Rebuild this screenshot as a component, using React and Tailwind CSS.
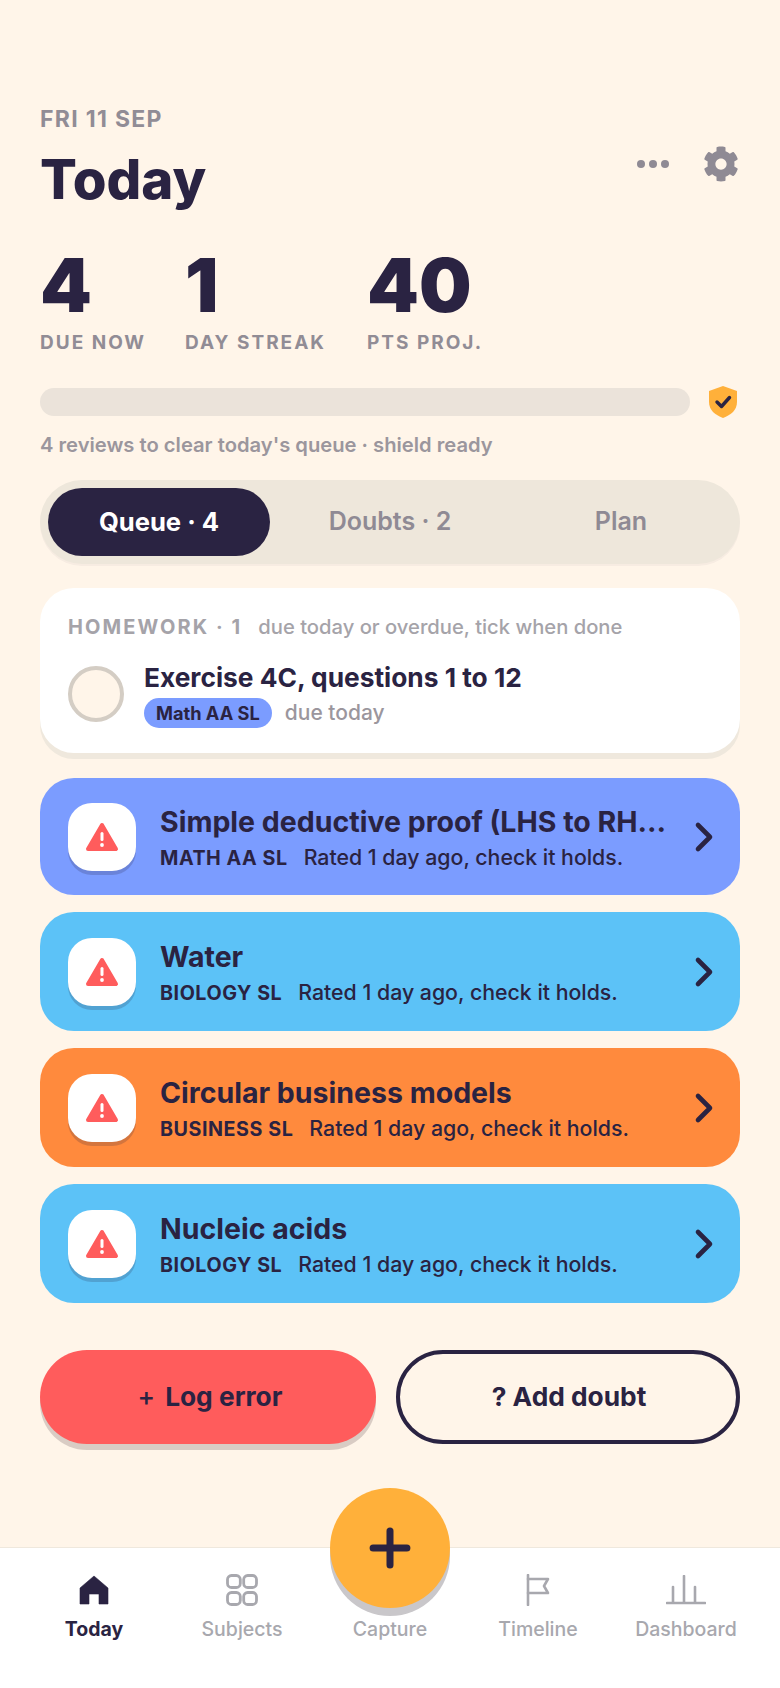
import React from 'react';
import { FaCog } from 'react-icons/fa';
import { Plus, ChevronRight } from 'lucide-react';

const rows = [
    { title: 'Simple deductive proof (LHS to RH…', subject: 'MATH AA SL', bg: 'bg-[#7b9cff]', h: 'h-[117px]' },
    { title: 'Water', subject: 'BIOLOGY SL', bg: 'bg-[#5cc2f7]', h: 'h-[119px]' },
    { title: 'Circular business models', subject: 'BUSINESS SL', bg: 'bg-[#ff8a3d]', h: 'h-[119px]' },
    { title: 'Nucleic acids', subject: 'BIOLOGY SL', bg: 'bg-[#5cc2f7]', h: 'h-[119px]' },
];

const Warning = () => (
    <svg width="34" height="30" viewBox="0 0 34 30">
        <path d="M17 3 L31 27 H3 Z" fill="#ff5c5c" stroke="#ff5c5c" strokeWidth="4" strokeLinejoin="round" />
        <rect x="15.5" y="10" width="3" height="9" rx="1.5" fill="#fff" />
        <circle cx="17" cy="23" r="1.9" fill="#fff" />
    </svg>
);

const Stat = ({ value, label, className }) => (
    <div className={className}>
        <div className="text-[74px] leading-[74px] font-black text-[#2a2342]">{value}</div>
        <div className="mt-[10px] text-[19px] leading-[22px] font-bold tracking-[2px] text-[#918c95]">{label}</div>
    </div>
);

const ReviewRow = ({ item }) => (
    <div className={`${item.bg} ${item.h} rounded-[34px] flex items-center pl-[28px] pr-[12px]`}>
        <div className="h-[68px] w-[68px] shrink-0 rounded-[24px] bg-white shadow-[0_4px_0_rgba(42,35,66,0.2)] flex items-center justify-center">
            <Warning />
        </div>
        <div className="ml-[24px] min-w-0 flex-1">
            <div className="pt-[1px] whitespace-nowrap text-[28.5px] leading-[36px] font-bold text-[#2a2342]">{item.title}</div>
            <div className="mt-[5px] flex items-baseline text-[#2a2342]">
                <span className="text-[19.7px] leading-[24px] font-bold tracking-[0.55px]">{item.subject}</span>
                <span className="ml-[16px] text-[21.3px] leading-[24px] font-medium">Rated 1 day ago, check it holds.</span>
            </div>
        </div>
        <ChevronRight className="shrink-0 text-[#2a2342]" size={48} strokeWidth={2.3} />
    </div>
);

const NavItem = ({ label, active, children }) => (
    <div className="flex-1 flex flex-col items-center">
        <div className="h-[44px] flex items-center justify-center">{children}</div>
        <div className={`mt-[5px] text-[19.5px] leading-[24px] ${active ? 'font-bold text-[#2a2342]' : 'font-medium text-[#a8a8ae]'}`}>{label}</div>
    </div>
);

export default function App() {
    return (
        <div className="relative h-[1688px] w-[780px] overflow-hidden bg-[#fff5e9] flex flex-col font-['Inter',sans-serif]">
            <main className="flex-1 px-[40px] pt-[106px]">
                <div className="text-[23px] leading-[27px] font-bold tracking-[1.3px] text-[#918c95]">FRI 11 SEP</div>

                <div className="mt-[15px] flex items-start justify-between">
                    <h1 className="text-[54.6px] leading-[63px] font-extrabold text-[#2a2342]">Today</h1>
                    <div className="-mt-[2px] flex items-center pr-[1px]">
                        <div className="flex gap-[4px]">
                            <span className="h-[8px] w-[8px] rounded-full bg-[#8f8a94]" />
                            <span className="h-[8px] w-[8px] rounded-full bg-[#8f8a94]" />
                            <span className="h-[8px] w-[8px] rounded-full bg-[#8f8a94]" />
                        </div>
                        <FaCog className="ml-[34px] text-[#8f8a94]" size={36} />
                    </div>
                </div>

                <div className="mt-[37px] flex">
                    <Stat value="4" label="DUE NOW" className="w-[145px]" />
                    <Stat value="1" label="DAY STREAK" className="w-[182px]" />
                    <Stat value="40" label="PTS PROJ." />
                </div>

                <div className="mt-[31px] flex items-center justify-between">
                    <div className="h-[28px] w-[650px] rounded-full bg-[#ebe3da]" />
                    <svg width="32" height="34" viewBox="0 0 32 34" className="mr-[1px]">
                        <path d="M16 1 L30 6 V17 C30 25 24 30 16 33 C8 30 2 25 2 17 V6 Z" fill="#ffb03a" />
                        <path d="M10 17 L14.5 21.5 L22.5 12.5" fill="none" stroke="#2a2342" strokeWidth="3.4" strokeLinecap="round" strokeLinejoin="round" />
                    </svg>
                </div>

                <p className="mt-[13px] text-[20.2px] leading-[26px] font-semibold text-[#9b969d]">4 reviews to clear today's queue · shield ready</p>

                <div className="mt-[22px] h-[84px] rounded-full bg-[#eee7db] p-[8px] flex shadow-[0_2px_0_rgba(42,35,66,0.04)]">
                    <div className="w-[222px] rounded-full bg-[#2a2342] flex items-center justify-center text-[25.6px] font-bold text-white">Queue · 4</div>
                    <div className="w-[240px] flex items-center justify-center text-[25px] font-semibold text-[#8f8a94]">Doubts · 2</div>
                    <div className="flex-1 flex items-center justify-center text-[25px] font-semibold text-[#8f8a94]">Plan</div>
                </div>

                <section className="mt-[24px] h-[165px] rounded-[34px] bg-white px-[28px] pt-[26px] shadow-[0_6px_0_#efe8dd]">
                    <div className="flex items-baseline">
                        <span className="text-[20px] leading-[26px] font-bold tracking-[2.1px] text-[#a5a3a9]">HOMEWORK · 1</span>
                        <span className="ml-[16px] text-[20.2px] leading-[26px] font-medium text-[#a5a3a9]">due today or overdue, tick when done</span>
                    </div>
                    <div className="mt-[20px] flex items-center">
                        <div className="h-[56px] w-[56px] rounded-full border-[4px] border-[#d4cdc4] bg-[#fff5e9]" />
                        <div className="ml-[20px]">
                            <div className="pt-[2px] text-[26.3px] leading-[32px] font-bold text-[#2a2342]">Exercise 4C, questions 1 to 12</div>
                            <div className="mt-[3px] flex items-center">
                                <span className="h-[30px] rounded-full bg-[#7b9cff] px-[12px] text-[18.2px] leading-[30px] font-bold text-[#2a2342]">Math AA SL</span>
                                <span className="ml-[13px] text-[21px] font-medium text-[#9b969d]">due today</span>
                            </div>
                        </div>
                    </div>
                </section>

                <div className="mt-[25px] flex flex-col gap-[17px]">
                    {rows.map((item) => (
                        <ReviewRow key={item.title} item={item} />
                    ))}
                </div>

                <div className="mt-[47px] flex gap-[20px]">
                    <button className="h-[94px] w-[336px] rounded-full bg-[#ff5c5c] pl-[4px] shadow-[0_6px_0_#d9ccc4] text-[26.3px] font-bold text-[#2a2342]">
                        <span className="mr-[10px] font-medium">+</span>Log error
                    </button>
                    <button className="h-[94px] flex-1 rounded-full border-[4px] border-[#2a2342] pl-[2px] text-[26.3px] font-bold text-[#2a2342]">? Add doubt</button>
                </div>
            </main>

            <nav className="h-[141px] shrink-0 bg-white border-t border-[#efe8dd] flex pt-[20px]">
                <div className="flex w-full px-[20px]">
                    <NavItem label="Today" active>
                        <svg width="30" height="30" viewBox="0 0 30 30">
                            <path d="M15 1 L29 13 V29 H20 V19 H10 V29 H1 V13 Z" fill="#2a2342" stroke="#2a2342" strokeWidth="0.6" strokeLinejoin="round" />
                        </svg>
                    </NavItem>
                    <NavItem label="Subjects">
                        <svg width="32" height="32" viewBox="0 0 32 32" fill="none" stroke="#a8a8ae" strokeWidth="2.8">
                            <rect x="1.5" y="1.5" width="12.8" height="12" rx="4" />
                            <rect x="17.7" y="1.5" width="12.8" height="12" rx="4" />
                            <rect x="1.5" y="18.5" width="12.8" height="12" rx="4" />
                            <rect x="17.7" y="18.5" width="12.8" height="12" rx="4" />
                        </svg>
                    </NavItem>
                    <NavItem label="Capture" />
                    <NavItem label="Timeline">
                        <svg width="24" height="32" viewBox="0 0 24 32" fill="none" stroke="#a8a8ae" strokeWidth="2.6" strokeLinejoin="round" strokeLinecap="round">
                            <path d="M2 1 V31" />
                            <path d="M2 5 H22 L18 12 L22 19 H2" />
                        </svg>
                    </NavItem>
                    <NavItem label="Dashboard">
                        <svg width="40" height="30" viewBox="0 0 40 30" fill="none" stroke="#a8a8ae" strokeWidth="2.6" strokeLinecap="round">
                            <path d="M1 28 H39" />
                            <path d="M7 27 V12" />
                            <path d="M18 27 V1" />
                            <path d="M29 27 V12" />
                        </svg>
                    </NavItem>
                </div>
            </nav>

            <button className="absolute left-[330px] top-[1488px] h-[120px] w-[120px] rounded-full bg-[#ffb03a] shadow-[0_8px_0_#c9c7ca] flex items-center justify-center text-[#2a2342]">
                <Plus size={58} strokeWidth={2.9} />
            </button>
        </div>
    );
}
